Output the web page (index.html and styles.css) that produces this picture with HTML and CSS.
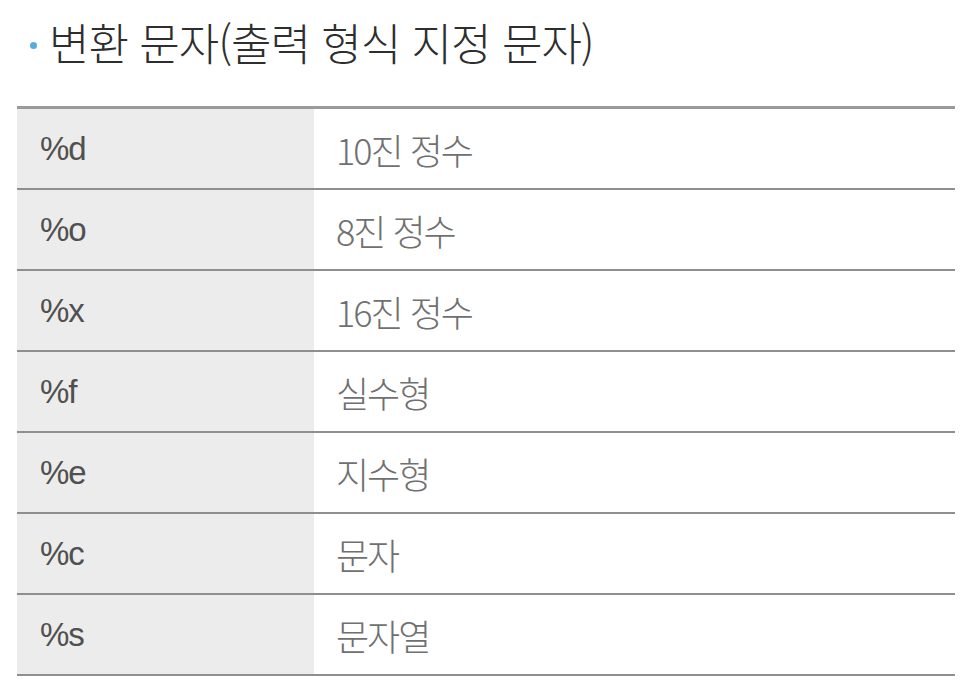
FILE: index.html
```html
<!DOCTYPE html>
<html lang="ko">
<head>
<meta charset="utf-8">
<link rel="stylesheet" href="styles.css">
</head>
<body>
<div class="page">
  <h1 class="title"><span class="bullet"></span>변환 문자(출력 형식 지정 문자)</h1>
  <div class="table">
    <div class="row"><div class="key">%d</div><div class="val">10진 정수</div></div>
    <div class="row"><div class="key">%o</div><div class="val">8진 정수</div></div>
    <div class="row"><div class="key">%x</div><div class="val">16진 정수</div></div>
    <div class="row"><div class="key">%f</div><div class="val">실수형</div></div>
    <div class="row"><div class="key">%e</div><div class="val">지수형</div></div>
    <div class="row"><div class="key">%c</div><div class="val">문자</div></div>
    <div class="row"><div class="key">%s</div><div class="val">문자열</div></div>
  </div>
</div>
</body>
</html>
```

FILE: styles.css
```css
html, body {
  margin: 0;
  padding: 0;
  background: #ffffff;
}
body {
  width: 976px;
  height: 686px;
  overflow: hidden;
  font-family: "Noto Sans CJK KR", "Noto Sans", sans-serif;
}
.page {
  padding-top: 14px;
}
.title {
  margin: 0;
  display: flex;
  align-items: center;
  padding-left: 30px;
  height: 56px;
  font-size: 44px;
  font-weight: 300;
  color: #2e2e2e;
  letter-spacing: -1px;
  line-height: 56px;
}
.bullet {
  width: 7px;
  height: 7px;
  border-radius: 50%;
  background: #56ace0;
  margin-right: 12px;
  margin-top: 6px;
}
.table {
  margin-top: 36px;
  margin-left: 17px;
  width: 938px;
  border-top: 3px solid #9a9a9a;
}
.row {
  display: grid;
  grid-template-columns: 297px 1fr;
  height: 79px;
  border-bottom: 2px solid #8f8f8f;
}
.key {
  background: #ececec;
  display: flex;
  align-items: center;
  padding-left: 23px;
  font-family: "Liberation Sans", sans-serif;
  font-size: 33px;
  color: #505050;
  letter-spacing: -1px;
}
.val {
  display: flex;
  align-items: center;
  padding-left: 22px;
  font-size: 36px;
  font-weight: 300;
  color: #707070;
  letter-spacing: -2px;
}
```
